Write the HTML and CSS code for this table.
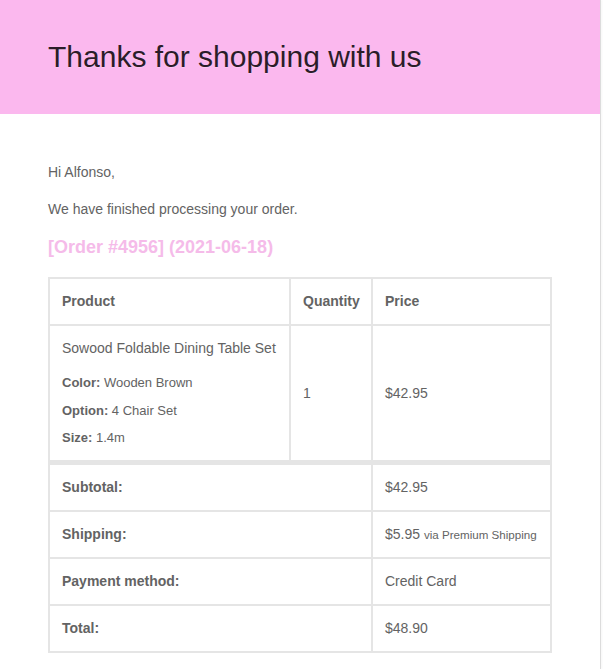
FILE: index.html
```html
<!DOCTYPE html>
<html>
<head>
<meta charset="utf-8">
<link rel="stylesheet" href="styles.css">
</head>
<body>
<div class="container">
  <div class="header">
    <h1>Thanks for shopping with us</h1>
  </div>
  <div class="content">
    <p>Hi Alfonso,</p>
    <p>We have finished processing your order.</p>
    <h2>[Order #4956] (2021-06-18)</h2>
    <table class="order">
      <colgroup>
        <col class="c1"><col class="c2"><col class="c3">
      </colgroup>
      <thead>
        <tr>
          <th>Product</th>
          <th>Quantity</th>
          <th>Price</th>
        </tr>
      </thead>
      <tbody>
        <tr>
          <td>
            <div class="name">Sowood Foldable Dining Table Set</div>
            <ul class="meta">
              <li><strong>Color:</strong> Wooden Brown</li>
              <li><strong>Option:</strong> 4 Chair Set</li>
              <li><strong>Size:</strong> 1.4m</li>
            </ul>
          </td>
          <td>1</td>
          <td>$42.95</td>
        </tr>
      </tbody>
      <tfoot>
        <tr class="first">
          <th colspan="2">Subtotal:</th>
          <td>$42.95</td>
        </tr>
        <tr>
          <th colspan="2">Shipping:</th>
          <td class="nowrap">$5.95 <small>via Premium Shipping</small></td>
        </tr>
        <tr>
          <th colspan="2">Payment method:</th>
          <td>Credit Card</td>
        </tr>
        <tr>
          <th colspan="2">Total:</th>
          <td>$48.90</td>
        </tr>
      </tfoot>
    </table>
  </div>
</div>
</body>
</html>
```

FILE: styles.css
```css
html, body {
  margin: 0;
  padding: 0;
  background: #ffffff;
}
body {
  font-family: "Liberation Sans", Arial, sans-serif;
  color: #636363;
}
.container {
  width: 600px;
  border-right: 1px solid #dcdcdc;
  box-shadow: 1px 0 2px rgba(0,0,0,0.04);
  min-height: 669px;
  background: #fff;
}
.header {
  background: #fbb8ee;
  padding: 36px 48px;
}
.header h1 {
  margin: 0;
  font-size: 30px;
  font-weight: 400;
  line-height: 42px;
  color: #2b1c29;
  text-shadow: 0 1px 0 #fcc6f1;
}
.content {
  padding: 48px 48px 16px;
}
.content p {
  margin: 0 0 16px;
  font-size: 14px;
  line-height: 21px;
}
.content h2 {
  margin: 0 0 18px;
  font-size: 18px;
  line-height: 23.4px;
  font-weight: 700;
  color: #f5bbe9;
}
.order {
  width: 504px;
  border-collapse: separate;
  border-spacing: 0;
  border: 1px solid #e5e5e5;
  table-layout: fixed;
}
.c1 { width: 241px; }
.c2 { width: 82px; }
.c3 { width: 179px; }
.order th, .order td {
  border: 1px solid #e5e5e5;
  padding: 12px;
  text-align: left;
  vertical-align: middle;
  font-size: 14px;
  line-height: 21px;
  color: #636363;
}
.order th {
  font-weight: 700;
}
.order td.nowrap {
  white-space: nowrap;
  padding-right: 4px;
}
.name {
  font-size: 14px;
  line-height: 21px;
}
.meta {
  list-style: none;
  margin: 13px 0 0;
  padding: 0;
  font-size: 13px;
  line-height: 21px;
}
.meta li {
  margin: 6.5px 0 0;
}
.meta li:first-child {
  margin-top: 0;
}
.order tfoot tr.first th, .order tfoot tr.first td {
  border-top-width: 4px;
}
.order small {
  font-size: 11.6px;
}
```
